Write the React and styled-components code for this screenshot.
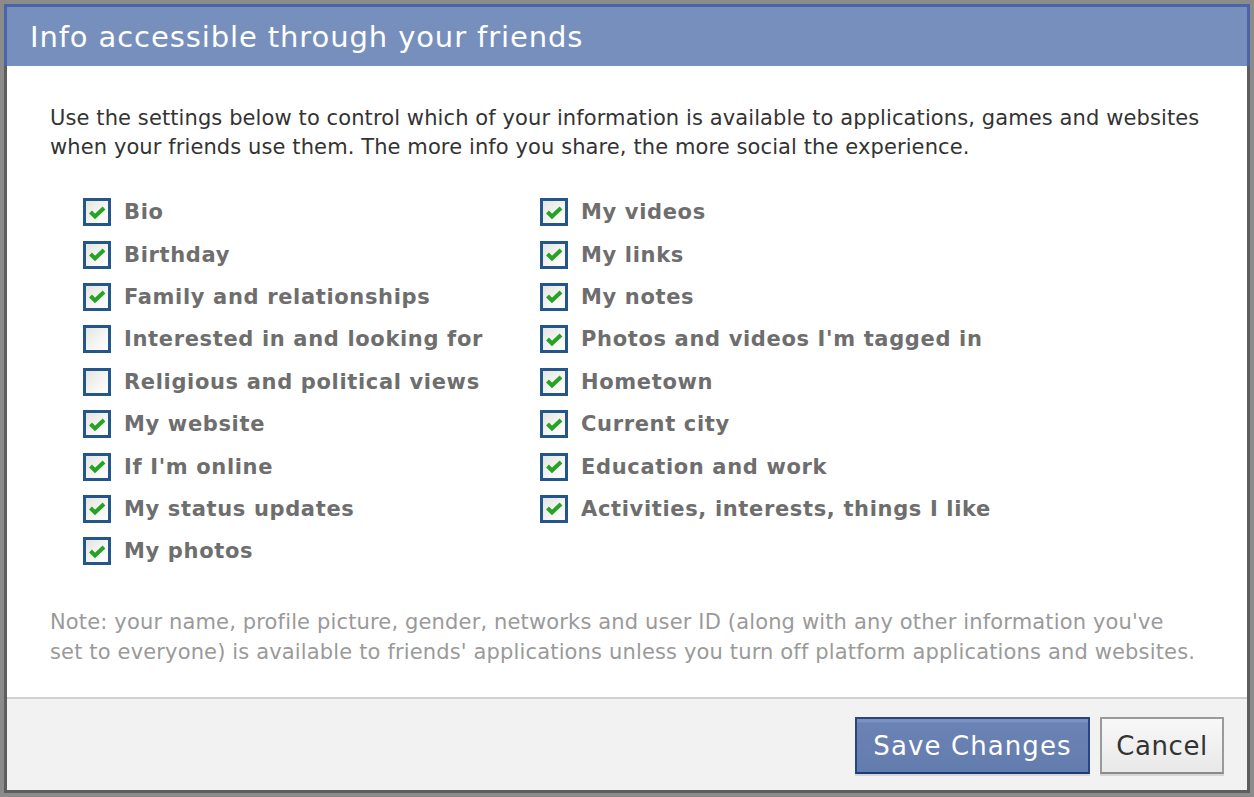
import React, { useState } from "react";
import styled, { createGlobalStyle } from "styled-components";

const Global = createGlobalStyle`
  html, body { margin: 0; padding: 0; background: #8b8b8b; }
  body { font-family: "DejaVu Sans", Verdana, sans-serif; }
`;

const Page = styled.div`
  padding: 4px;
  width: 1254px;
  height: 797px;
  box-sizing: border-box;
`;

const Dialog = styled.div`
  display: flex;
  flex-direction: column;
  height: 789px;
  box-sizing: border-box;
  border: 3px solid #5e5e5e;
  background: #fff;
`;

const Header = styled.div`
  margin: -3px -3px 0;
  height: 62px;
  box-sizing: border-box;
  border: 3px solid #4865a8;
  border-bottom: none;
  background: #778fbc;
  color: #fff;
  font-size: 29px;
  padding: 13px 0 0 23px;
  line-height: 34px;
  letter-spacing: 0.9px;
  white-space: nowrap;
`;

const Body = styled.div`
  flex: 1;
  padding: 38px 30px 0 43px;
`;

const Intro = styled.p`
  margin: 0;
  font-size: 21px;
  line-height: 29px;
  color: #333;
  letter-spacing: 0.1px;
  white-space: nowrap;
`;

const Columns = styled.div`
  display: grid;
  grid-template-columns: 457px 1fr;
  margin: 29px 0 0 33px;
`;

const Column = styled.div`
  display: flex;
  flex-direction: column;
`;

const Row = styled.label`
  display: flex;
  align-items: center;
  height: 42.4px;
  gap: 13px;
  font-weight: bold;
  font-size: 21px;
  color: #6e6e6e;
  letter-spacing: 0.65px;
  cursor: pointer;
  white-space: nowrap;
`;

const Box = styled.span`
  width: 28px;
  height: 28px;
  box-sizing: border-box;
  border: 3px solid #23568a;
  background: linear-gradient(135deg, #e4e4e0 0%, #f6f6f4 60%, #ffffff 100%);
  display: flex;
  align-items: center;
  justify-content: center;
  flex-shrink: 0;
`;

const Note = styled.p`
  margin: 34px 0 0;
  font-size: 21px;
  line-height: 30px;
  color: #9a9a9a;
  letter-spacing: 0.15px;
  white-space: nowrap;
`;

const Footer = styled.div`
  height: 93px;
  box-sizing: border-box;
  border-top: 2px solid #d0d0d0;
  background: #f2f2f2;
  display: flex;
  justify-content: flex-end;
  align-items: flex-start;
  gap: 10px;
  padding: 18px 23px 0 0;
`;

const Button = styled.button`
  height: 57px;
  box-sizing: border-box;
  padding: 0;
  font-family: "DejaVu Sans", Verdana, sans-serif;
  font-size: 26px;
  letter-spacing: ${(p) => (p.$primary ? "1.1px" : "0.6px")};
  cursor: pointer;
  border: 2px solid ${(p) => (p.$primary ? "#29447e" : "#9a9a9a")};
  border-bottom-color: ${(p) => (p.$primary ? "#1f3a74" : "#8a8a8a")};
  color: ${(p) => (p.$primary ? "#fff" : "#333")};
  background: ${(p) =>
    p.$primary
      ? "linear-gradient(#7a92c2 0, #7a92c2 3px, #6b83b4 4px, #637cae 100%)"
      : "linear-gradient(#f8f8f8, #e8e8e8)"};
  box-shadow: 0 2px 0 #d6d6d6;
  width: ${(p) => p.$w}px;
`;

const Check = () => (
  <svg width="17" height="15" viewBox="0 0 17 15">
    <path
      d="M1.5 7 L6 11.5 L15 3"
      fill="none"
      stroke="#26a226"
      strokeWidth="4"
      strokeLinejoin="miter"
    />
  </svg>
);

const left = [
  ["Bio", true],
  ["Birthday", true],
  ["Family and relationships", true],
  ["Interested in and looking for", false],
  ["Religious and political views", false],
  ["My website", true],
  ["If I'm online", true],
  ["My status updates", true],
  ["My photos", true],
];

const right = [
  ["My videos", true],
  ["My links", true],
  ["My notes", true],
  ["Photos and videos I'm tagged in", true],
  ["Hometown", true],
  ["Current city", true],
  ["Education and work", true],
  ["Activities, interests, things I like", true],
];

function Item({ label, initial }) {
  const [on, setOn] = useState(initial);
  return (
    <Row onClick={() => setOn(!on)}>
      <Box>{on && <Check />}</Box>
      {label}
    </Row>
  );
}

export default function App() {
  return (
    <Page>
      <Global />
      <Dialog>
        <Header>Info accessible through your friends</Header>
        <Body>
          <Intro>
            Use the settings below to control which of your information is available to applications, games and websites
            <br />
            when your friends use them. The more info you share, the more social the experience.
          </Intro>
          <Columns>
            <Column>
              {left.map(([l, c]) => (
                <Item key={l} label={l} initial={c} />
              ))}
            </Column>
            <Column>
              {right.map(([l, c]) => (
                <Item key={l} label={l} initial={c} />
              ))}
            </Column>
          </Columns>
          <Note>
            Note: your name, profile picture, gender, networks and user ID (along with any other information you've
            <br />
            set to everyone) is available to friends' applications unless you turn off platform applications and websites.
          </Note>
        </Body>
        <Footer>
          <Button $primary $w={235}>Save Changes</Button>
          <Button $w={124}>Cancel</Button>
        </Footer>
      </Dialog>
    </Page>
  );
}
